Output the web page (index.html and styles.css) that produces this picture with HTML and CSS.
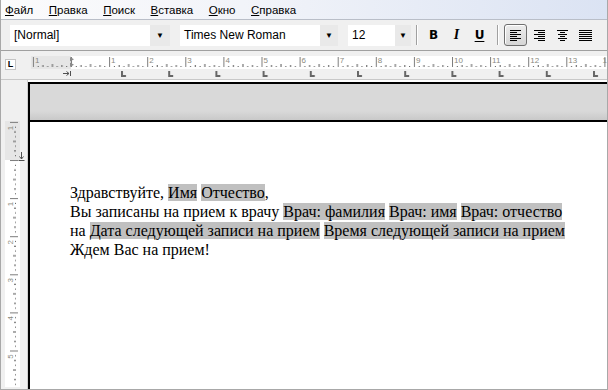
FILE: index.html
```html
<!DOCTYPE html>
<html lang="ru">
<head>
  <meta charset="UTF-8">
  <title>Шаблон письма</title>
  <link rel="stylesheet" href="styles.css">
</head>
<body>

<div class="window">

  <div class="menubar">
    <span class="menu"><u>Ф</u>айл</span>
    <span class="menu"><u>П</u>равка</span>
    <span class="menu"><u>П</u>оиск</span>
    <span class="menu"><u>В</u>ставка</span>
    <span class="menu"><u>О</u>кно</span>
    <span class="menu"><u>С</u>правка</span>
  </div>

  <div class="toolbar">
    <div class="combo combo-style">
      <div class="field">[Normal]</div>
      <div class="drop">&#9660;</div>
    </div>
    <div class="combo combo-font">
      <div class="field">Times New Roman</div>
      <div class="drop">&#9660;</div>
    </div>
    <div class="combo combo-size">
      <div class="field">12</div>
      <div class="drop">&#9660;</div>
    </div>
    <div class="sep"></div>
    <div class="btn btn-b">B</div>
    <div class="btn btn-i">I</div>
    <div class="btn btn-u">U</div>
    <div class="sep"></div>
    <div class="btn pressed">
      <svg width="11" height="11" viewBox="0 0 11 11">
        <path d="M0 0.5H11M0 2.5H7M0 4.5H11M0 6.5H7M0 8.5H11M0 10.5H7" stroke="#000" stroke-width="1"/>
      </svg>
    </div>
    <div class="btn">
      <svg width="11" height="11" viewBox="0 0 11 11">
        <path d="M0 0.5H11M4 2.5H11M0 4.5H11M4 6.5H11M0 8.5H11M4 10.5H11" stroke="#000" stroke-width="1"/>
      </svg>
    </div>
    <div class="btn">
      <svg width="11" height="11" viewBox="0 0 11 11">
        <path d="M0 0.5H11M3 2.5H8M1 4.5H10M3 6.5H8M1 8.5H10M3 10.5H8" stroke="#000" stroke-width="1"/>
      </svg>
    </div>
    <div class="btn">
      <svg width="13" height="11" viewBox="0 0 13 11">
        <path d="M0 0.5H13M0 2.5H13M0 4.5H13M0 6.5H13M0 8.5H13M0 10.5H13" stroke="#000" stroke-width="1"/>
      </svg>
    </div>
  </div>

  <div class="rulerbar">
    <div class="tabkind">L</div>
    <svg class="hruler" width="576" height="28" viewBox="0 0 576 28">
      <defs>
        <pattern id="hticks" patternUnits="userSpaceOnUse" x="40" y="0" width="38.1" height="28">
          <rect x="0" y="6" width="1" height="10" fill="#7c7c7c"/>
          <rect x="4.76" y="15" width="1" height="1" fill="#555"/>
          <rect x="9.53" y="14" width="1" height="2" fill="#555"/>
          <rect x="14.29" y="15" width="1" height="1" fill="#555"/>
          <rect x="19.05" y="13" width="1" height="3" fill="#555"/>
          <rect x="23.81" y="15" width="1" height="1" fill="#555"/>
          <rect x="28.58" y="14" width="1" height="2" fill="#555"/>
          <rect x="33.34" y="15" width="1" height="1" fill="#555"/>
        </pattern>
        <pattern id="htabs" patternUnits="userSpaceOnUse" x="90" y="0" width="47.2" height="28">
          <rect x="0" y="20" width="2" height="6" fill="#666"/>
          <rect x="0" y="24" width="5" height="2" fill="#666"/>
        </pattern>
      </defs>
      <rect x="0" y="5" width="576" height="13" fill="#fff"/>
      <rect x="0" y="5" width="40" height="13" fill="#e6e6e6"/>
      <rect x="0" y="5" width="576" height="13" fill="url(#hticks)"/>
      <rect x="88" y="19" width="488" height="8" fill="url(#htabs)"/>
      <g class="rnum">
        <text x="3.9" y="12">1</text>
        <text x="80.1" y="12">1</text>
        <text x="118.2" y="12">2</text>
        <text x="156.3" y="12">3</text>
        <text x="194.4" y="12">4</text>
        <text x="232.5" y="12">5</text>
        <text x="270.6" y="12">6</text>
        <text x="308.7" y="12">7</text>
        <text x="346.8" y="12">8</text>
        <text x="384.9" y="12">9</text>
        <text x="423" y="12">10</text>
        <text x="461.1" y="12">11</text>
        <text x="499.2" y="12">12</text>
        <text x="537.3" y="12">13</text>
        <text x="571.5" y="12">1</text>
      </g>
      <polygon points="39,6 39,10.5 43,8.2" fill="#8a8a8a"/>
      <polygon points="39,11.5 39,16 43,13.8" fill="#8a8a8a"/>
      <path d="M32 22.5H38M35.5 20.5L38 22.5L35.5 24.5M39.5 20V25" stroke="#505050" stroke-width="1" fill="none"/>
    </svg>
  </div>

  <div class="workspace">
    <div class="vruler">
      <svg width="26" height="307" viewBox="0 0 26 307">
        <defs>
          <pattern id="vticks" patternUnits="userSpaceOnUse" x="0" y="80" width="26" height="38.1">
            <rect x="9" y="0" width="8" height="1" fill="#7c7c7c"/>
            <rect x="14" y="4.76" width="1" height="1" fill="#555"/>
            <rect x="13" y="9.53" width="2" height="1" fill="#555"/>
            <rect x="14" y="14.29" width="1" height="1" fill="#555"/>
            <rect x="12" y="19.05" width="3" height="1" fill="#555"/>
            <rect x="14" y="23.81" width="1" height="1" fill="#555"/>
            <rect x="13" y="28.58" width="2" height="1" fill="#555"/>
            <rect x="14" y="33.34" width="1" height="1" fill="#555"/>
          </pattern>
        </defs>
        <rect x="4" y="41" width="15" height="266" fill="#fff"/>
        <rect x="4" y="41" width="15" height="39" fill="#e6e6e6"/>
        <rect x="4" y="41" width="15" height="266" fill="url(#vticks)"/>
        <g class="rnum">
          <text transform="translate(12 48) rotate(-90)" text-anchor="middle">1</text>
          <text transform="translate(12 124) rotate(-90)" text-anchor="middle">1</text>
          <text transform="translate(12 162.2) rotate(-90)" text-anchor="middle">2</text>
          <text transform="translate(12 200.3) rotate(-90)" text-anchor="middle">3</text>
          <text transform="translate(12 238.4) rotate(-90)" text-anchor="middle">4</text>
          <text transform="translate(12 276.5) rotate(-90)" text-anchor="middle">5</text>
        </g>
        <path d="M20.5 72V79M18.5 76.5L20.5 79L22.5 76.5M17.5 80.5H23.5" stroke="#505050" stroke-width="1" fill="none"/>
      </svg>
    </div>

    <div class="page">
      <div class="page-header"></div>
      <div class="page-body">
        <p class="letter">
          Здравствуйте, <span class="fld">Имя</span> <span class="fld">Отчество</span>,<br>
          Вы записаны на прием к врачу <span class="fld">Врач: фамилия</span> <span class="fld">Врач: имя</span> <span class="fld">Врач: отчество</span><br>
          на <span class="fld">Дата следующей записи на прием</span> <span class="fld">Время следующей записи на прием</span><br>
          Ждем Вас на прием!
        </p>
      </div>
    </div>
  </div>

</div>

</body>
</html>
```

FILE: styles.css
```css
body {
  margin: 0;
  background: #fff;
  font-family: 'Liberation Sans', Arial, sans-serif;
}

.window {
  width: 608px;
  height: 390px;
  box-sizing: border-box;
  border: 1px solid #a8a8a8;
  border-top: none;
  display: flex;
  flex-direction: column;
  overflow: hidden;
}

/* menu */
.menubar {
  height: 19px;
  border-bottom: 1px solid #b9bec8;
  background: linear-gradient(to right, #fbfbfc, #f2f4f9 40%, #dbe3f3);
  display: flex;
  align-items: center;
  padding-left: 3px;
  font-size: 11.5px;
  color: #000;
}

.menu {
  padding: 0 8px 0 1px;
  margin-right: 6.5px;
}

.menu u {
  text-decoration-thickness: 1px;
  text-underline-offset: 1px;
}

/* toolbar */
.toolbar {
  height: 30px;
  background: #f0f0f0;
  border-bottom: 1px solid #a0a0a0;
  box-shadow: 0 1px 0 #fff;
  display: flex;
  align-items: center;
  padding-left: 9px;
}

.combo {
  display: flex;
  height: 21px;
  margin-right: 10px;
}

.combo .field {
  background: #fff;
  font-size: 12px;
  line-height: 21px;
  padding-left: 4px;
  color: #000;
  white-space: nowrap;
}

.combo .drop {
  background: #e9e9e9;
  font-size: 8px;
  line-height: 21px;
  text-align: center;
  color: #000;
}

.combo-style .field { width: 136px; }
.combo-style .drop { width: 20px; }

.combo-font .field { width: 136px; }
.combo-font .drop { width: 18px; }

.combo-size { margin-right: 5px; }
.combo-size .field { width: 43px; }
.combo-size .drop { width: 16px; }

.sep {
  width: 1px;
  height: 20px;
  background: #a0a0a0;
  border-right: 1px solid #fff;
  margin-right: 4px;
}

.btn {
  width: 21px;
  height: 20px;
  border: 1px solid transparent;
  border-radius: 3px;
  display: flex;
  align-items: center;
  justify-content: center;
  font-family: 'DejaVu Sans', sans-serif;
  font-size: 12px;
  font-weight: bold;
  color: #000;
}

.btn-i {
  font-family: 'Liberation Serif', serif;
  font-size: 14px;
  font-style: italic;
}

.btn-u {
  text-decoration: underline;
  text-underline-offset: 2px;
}

.btn-u + .sep {
  margin-left: 6px;
  margin-right: 5px;
}

.btn.pressed {
  border-color: #6e6e6e;
  background: linear-gradient(#ececec, #d6d6d6);
  box-shadow: inset 1px 1px 0 #fff;
  margin-right: 1px;
}

/* rulers */
.rulerbar {
  height: 28px;
  background: #f0f0f0;
  border-bottom: 1px solid #c8c8c8;
  display: flex;
  align-items: flex-start;
}

.tabkind {
  width: 9px;
  height: 9px;
  margin: 8px 0 0 4px;
  background: #fff;
  border: 1px solid #c4c4c4;
  font-size: 9px;
  font-weight: bold;
  line-height: 9px;
  text-align: center;
  color: #000;
}

.hruler {
  display: block;
  margin-left: 15px;
}

.rnum {
  font-family: 'Liberation Sans', sans-serif;
  font-size: 8px;
  fill: #8a8a80;
}

.workspace {
  flex: 1;
  display: flex;
  min-height: 0;
}

.vruler {
  width: 26px;
  background: #f0f0f0;
  border-right: 1px solid #d0d0d0;
}

.vruler svg {
  display: block;
}

/* page */
.page {
  flex: 1;
  margin-top: 2px;
  border-left: 2px solid #000;
  display: flex;
  flex-direction: column;
}

.page-header {
  height: 36px;
  border-top: 2px solid #000;
  border-bottom: 2px solid #000;
  background: linear-gradient(#d9d9d9 75%, #c9c9c9);
}

.page-body {
  flex: 1;
  background: #fff;
  padding: 61px 0 0 40px;
}

.letter {
  margin: 0;
  font-family: 'Liberation Serif', 'Times New Roman', serif;
  font-size: 16px;
  line-height: 19px;
  color: #000;
  white-space: nowrap;
}

.fld {
  background: #c0c0c0;
}
```
